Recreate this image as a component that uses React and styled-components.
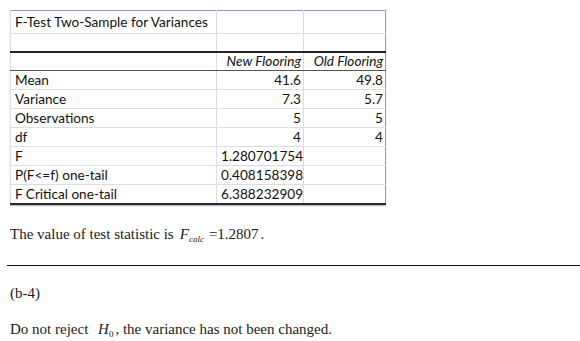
import React from 'react'
import styled, { createGlobalStyle } from 'styled-components'

const GlobalStyle = createGlobalStyle`
body {
  margin: 0;
  background: #fff;
}
`

const Page = styled.div`
display: flex;
flex-direction: column;
align-items: flex-start;
padding: 10px 0 0 0;
width: 580px;
`

const Sheet = styled.table`
margin-left: 10px;
border-collapse: collapse;
width: 375px;
table-layout: fixed;
font-family: Lato, 'Liberation Sans', sans-serif;
font-size: 13.6px;
color: #111;
border-top: 1px solid #a68ad2;
border-left: 1px solid #a68ad2;
border-right: 1px solid #a68ad2;
border-bottom: 2px solid #2a2a35;
box-shadow: 0 1px 1px rgba(0, 0, 0, 0.25);
`

const Row = styled.tr`
height: ${props => props.$h}px;

td {
  border-bottom: ${props =>
    props.$rule === 'thick' ? '2px solid #222' :
    props.$rule === 'dark' ? '1px solid #555' : '1px solid #dadde6'};
}
`

const Cell = styled.td`
padding: 0 2px 0 4px;
border-left: 1px solid #dadde6;
text-align: ${props => props.$right ? 'right' : 'left'};
font-style: ${props => props.$italic ? 'italic' : 'normal'};
white-space: nowrap;
line-height: 16px;
vertical-align: middle;
`

const Prose = styled.p`
margin: ${props => props.$top}px 0 0 10px;
font-family: 'Liberation Serif', 'Times New Roman', serif;
font-size: 15px;
line-height: 18px;
color: #1a1a1a;
`

const Symbol = styled.i`
font-style: italic;
margin: 0 0 0 6px;
`

const Sub = styled.sub`
font-size: 9px;
font-style: ${props => props.$italic ? 'italic' : 'normal'};
vertical-align: -3px;
line-height: 0;
margin: 0 ${props => props.$gap || 2}px 0 0;
`

const Rule = styled.hr`
align-self: stretch;
margin: 22px 0 0 7px;
border: none;
border-top: 1.5px solid #111;
height: 0;
`

const rows = [
  ['Mean', '41.6', '49.8'],
  ['Variance', '7.3', '5.7'],
  ['Observations', '5', '5'],
  ['df', '4', '4'],
  ['F', '1.280701754', ''],
  ['P(F<=f) one-tail', '0.408158398', ''],
  ['F Critical one-tail', '6.388232909', ''],
]

export default function App() {
  return (
    <>
      <GlobalStyle />
      <Page>
        <Sheet>
          <colgroup>
            <col style={{ width: 206 }} />
            <col style={{ width: 87 }} />
            <col style={{ width: 82 }} />
          </colgroup>
          <tbody>
            <Row $h={23}>
              <Cell>F-Test Two-Sample for Variances</Cell>
              <Cell />
              <Cell />
            </Row>
            <Row $h={18} $rule='thick'>
              <Cell />
              <Cell />
              <Cell />
            </Row>
            <Row $h={19} $rule='dark'>
              <Cell />
              <Cell $right $italic>New Flooring</Cell>
              <Cell $right $italic>Old Flooring</Cell>
            </Row>
            {rows.map(([label, a, b], i) => (
              <Row key={label} $h={19} $rule={i === rows.length - 1 ? 'none' : ''}>
                <Cell>{label}</Cell>
                <Cell $right>{a}</Cell>
                <Cell $right>{b}</Cell>
              </Row>
            ))}
          </tbody>
        </Sheet>

        <Prose $top={20}>
          The value of test statistic is
          <Symbol>F</Symbol><Sub $italic $gap={5}>calc</Sub>
          =1.2807<span style={{ marginLeft: 2 }}>.</span>
        </Prose>

        <Rule />

        <Prose $top={18}>(b-4)</Prose>

        <Prose $top={18}>
          Do not reject {' '}<Symbol>H</Symbol><Sub>0</Sub>, the variance has not been changed.
        </Prose>
      </Page>
    </>
  )
}
